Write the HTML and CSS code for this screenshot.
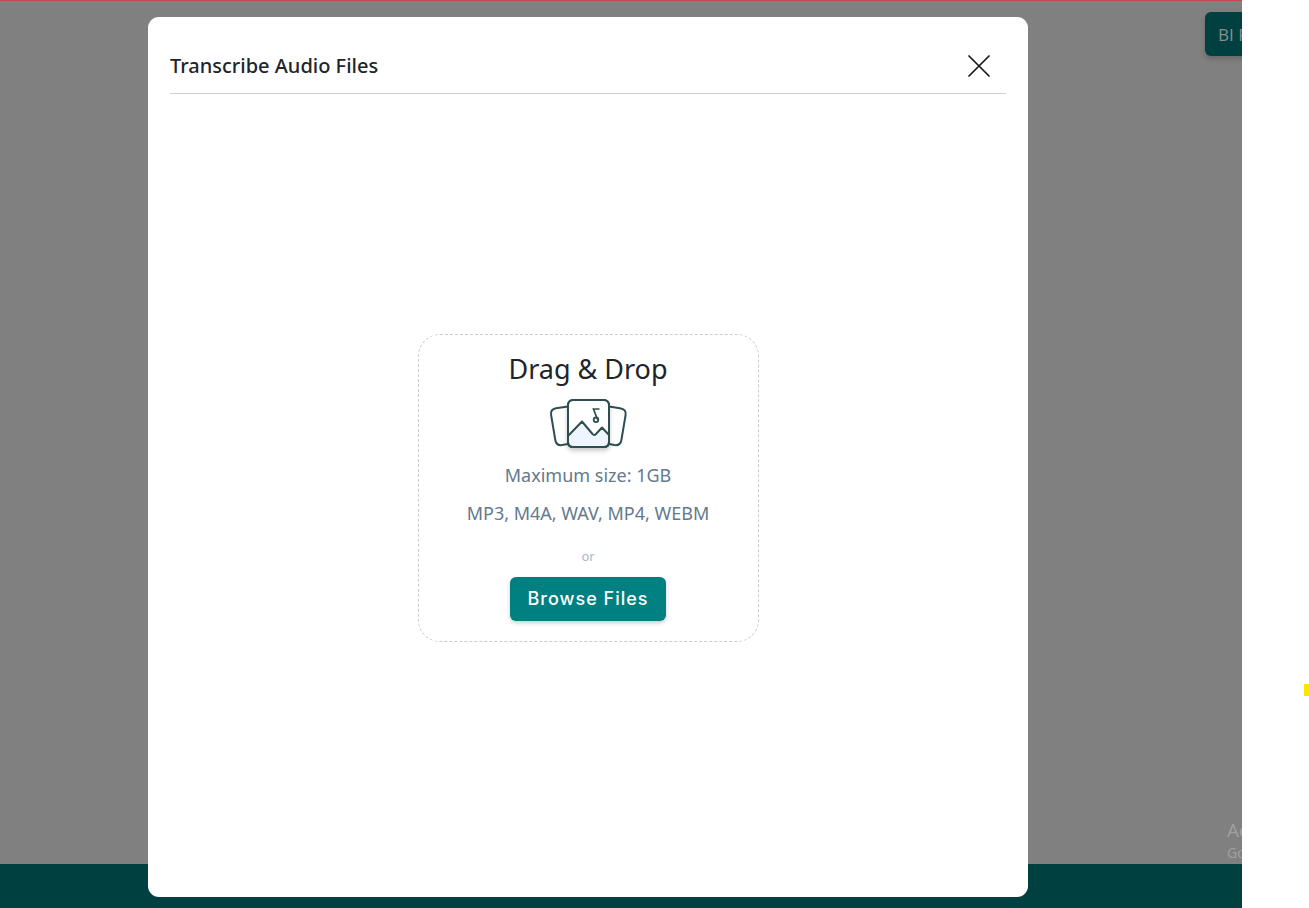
FILE: index.html
```html
<!DOCTYPE html>
<html lang="en">
<head>
<meta charset="utf-8">
<title>Transcribe Audio Files</title>
<link rel="stylesheet" href="styles.css">
</head>
<body>
<div class="app">
  <header class="topbar"><button class="bi-button" type="button">BI R</button></header>
  <main class="page">
    <div class="watermark"><p class="watermark-title">Ac</p><p class="watermark-text">Go</p></div>
  </main>
  <footer class="footer"></footer>
  <div class="overlay">
    <section class="modal" role="dialog" aria-labelledby="modal-title">
      <div class="modal-head">
        <h1 class="modal-title" id="modal-title">Transcribe Audio Files</h1>
        <button class="close" type="button" aria-label="Close">
          <svg width="22" height="22" viewBox="0 0 22 22" fill="none" stroke="#16181d" stroke-width="1.7" stroke-linecap="round"><path d="M1 1 21 21M21 1 1 21"/></svg>
        </button>
      </div>
      <div class="modal-body">
        <div class="dropzone">
          <h2 class="drop-title">Drag &amp; Drop</h2>
          <svg class="drop-icon" width="80" height="54" viewBox="0 0 80 54" fill="none" stroke="#2f4f4f" stroke-width="2" stroke-linejoin="round">
            <path d="M20 8.500 8 10.300Q2.200 11.300 3.100 17L7.300 42Q8.400 48 14 47.100L20 46"/>
            <path d="M61 8.500 72 10.300Q78.500 11.300 77.600 17L73.400 42Q72.300 48 66.500 47.100L61 46"/>
            <rect class="photo" x="20" y="2" width="41" height="47" rx="5" fill="#fff"/>
            <path d="M20 38 34 23.500 44.500 36Q46 38 48 36L54 29.500 61 37V44Q61 49 56 49H25Q20 49 20 44Z" fill="#eef5ff"/>
            <rect x="20" y="2" width="41" height="47" rx="5"/>
            <path d="M51.500 11H45.500L49.500 21.500" stroke-width="1.700" stroke-linejoin="miter"/>
            <circle cx="48" cy="21.800" r="2.300" stroke-width="1.800"/>
          </svg>
          <p class="drop-info">Maximum size: 1GB</p>
          <p class="drop-info">MP3, M4A, WAV, MP4, WEBM</p>
          <p class="drop-or">or</p>
          <button class="browse" type="button">Browse Files</button>
        </div>
      </div>
    </section>
  </div>
</div>
<aside class="gutter"><span class="marker"></span></aside>
</body>
</html>
```
FILE: styles.css
```css
* { box-sizing: border-box; }
body {
  margin: 0;
  min-height: 100vh;
  display: flex;
  background: #fff;
  color: #212529;
  font-family: "Noto Sans", "Open Sans", sans-serif;
}
h1, h2, p { margin: 0; }
button { border: 0; font-family: inherit; cursor: pointer; }
.app {
  position: relative;
  flex: 1;
  min-width: 0;
  display: flex;
  flex-direction: column;
  overflow: hidden;
  background: #808080;
  border-top: 1px solid #c24a4a;
}
.topbar { display: flex; padding-top: 11px; padding-left: calc(100% - 37px); }
.bi-button {
  flex: none;
  height: 44px;
  padding: 0 13px;
  border-radius: 6px;
  background: #004040;
  color: #8c8c8c;
  font-family: "Open Sans", sans-serif;
  font-size: 17px;
  white-space: nowrap;
  box-shadow: 0 3px 5px rgba(0, 0, 0, .2);
}
.page { flex: 1; display: flex; align-items: flex-end; justify-content: flex-end; }
.watermark { width: 15px; overflow: hidden; color: #a0a0a0; font-family: "Open Sans", sans-serif; }
.watermark-title { font-size: 19px; line-height: 24px; }
.watermark-text { font-size: 14px; line-height: 22px; }
.footer { height: 44px; background: #004040; }
.overlay {
  position: absolute;
  inset: 0;
  display: flex;
  padding: 16px 214px 11px 148px;
}
.modal {
  flex: 1;
  min-width: 0;
  display: flex;
  flex-direction: column;
  padding: 22px;
  border-radius: 11px;
  background: #fff;
}
.modal-head {
  display: flex;
  align-items: center;
  justify-content: space-between;
  height: 55px;
  padding: 0 16px 0 0;
  border-bottom: 1px solid #d0d0d0;
}
.modal-title { font-size: 20px; font-weight: 500; line-height: 30px; }
.close { display: flex; padding: 0; background: none; }
.modal-body { flex: 1; display: flex; align-items: center; justify-content: center; padding-top: 6px; }
.dropzone {
  width: 341px;
  display: flex;
  flex-direction: column;
  align-items: center;
  padding: 15px 20px 20px;
  border: 1px dashed #ccc;
  border-radius: 22px;
}
.drop-title { font-size: 27px; font-weight: 400; line-height: 38px; }
.drop-icon { margin-top: 10px; margin-bottom: 4px; overflow: visible; }
.photo { filter: drop-shadow(0 3px 2px rgba(0, 0, 0, .2)); }
.drop-info { font-size: 18px; line-height: 38px; color: #64798d; }
.drop-or { margin-top: 14px; font-size: 13px; line-height: 20px; color: #a9b8c8; }
.browse {
  height: 44px;
  margin-top: 11px;
  padding: 0 18px;
  border-radius: 6px;
  background: #008080;
  color: #fff;
  font-family: Inter, "Noto Sans", sans-serif;
  font-size: 18px;
  font-weight: 500;
  letter-spacing: 1px;
  box-shadow: 0 2px 4px rgba(0, 0, 0, .2);
}
.gutter { width: 67px; display: flex; justify-content: flex-end; align-items: flex-start; padding-top: 684px; }
.marker { width: 5px; height: 12px; background: #fbe600; }
```
